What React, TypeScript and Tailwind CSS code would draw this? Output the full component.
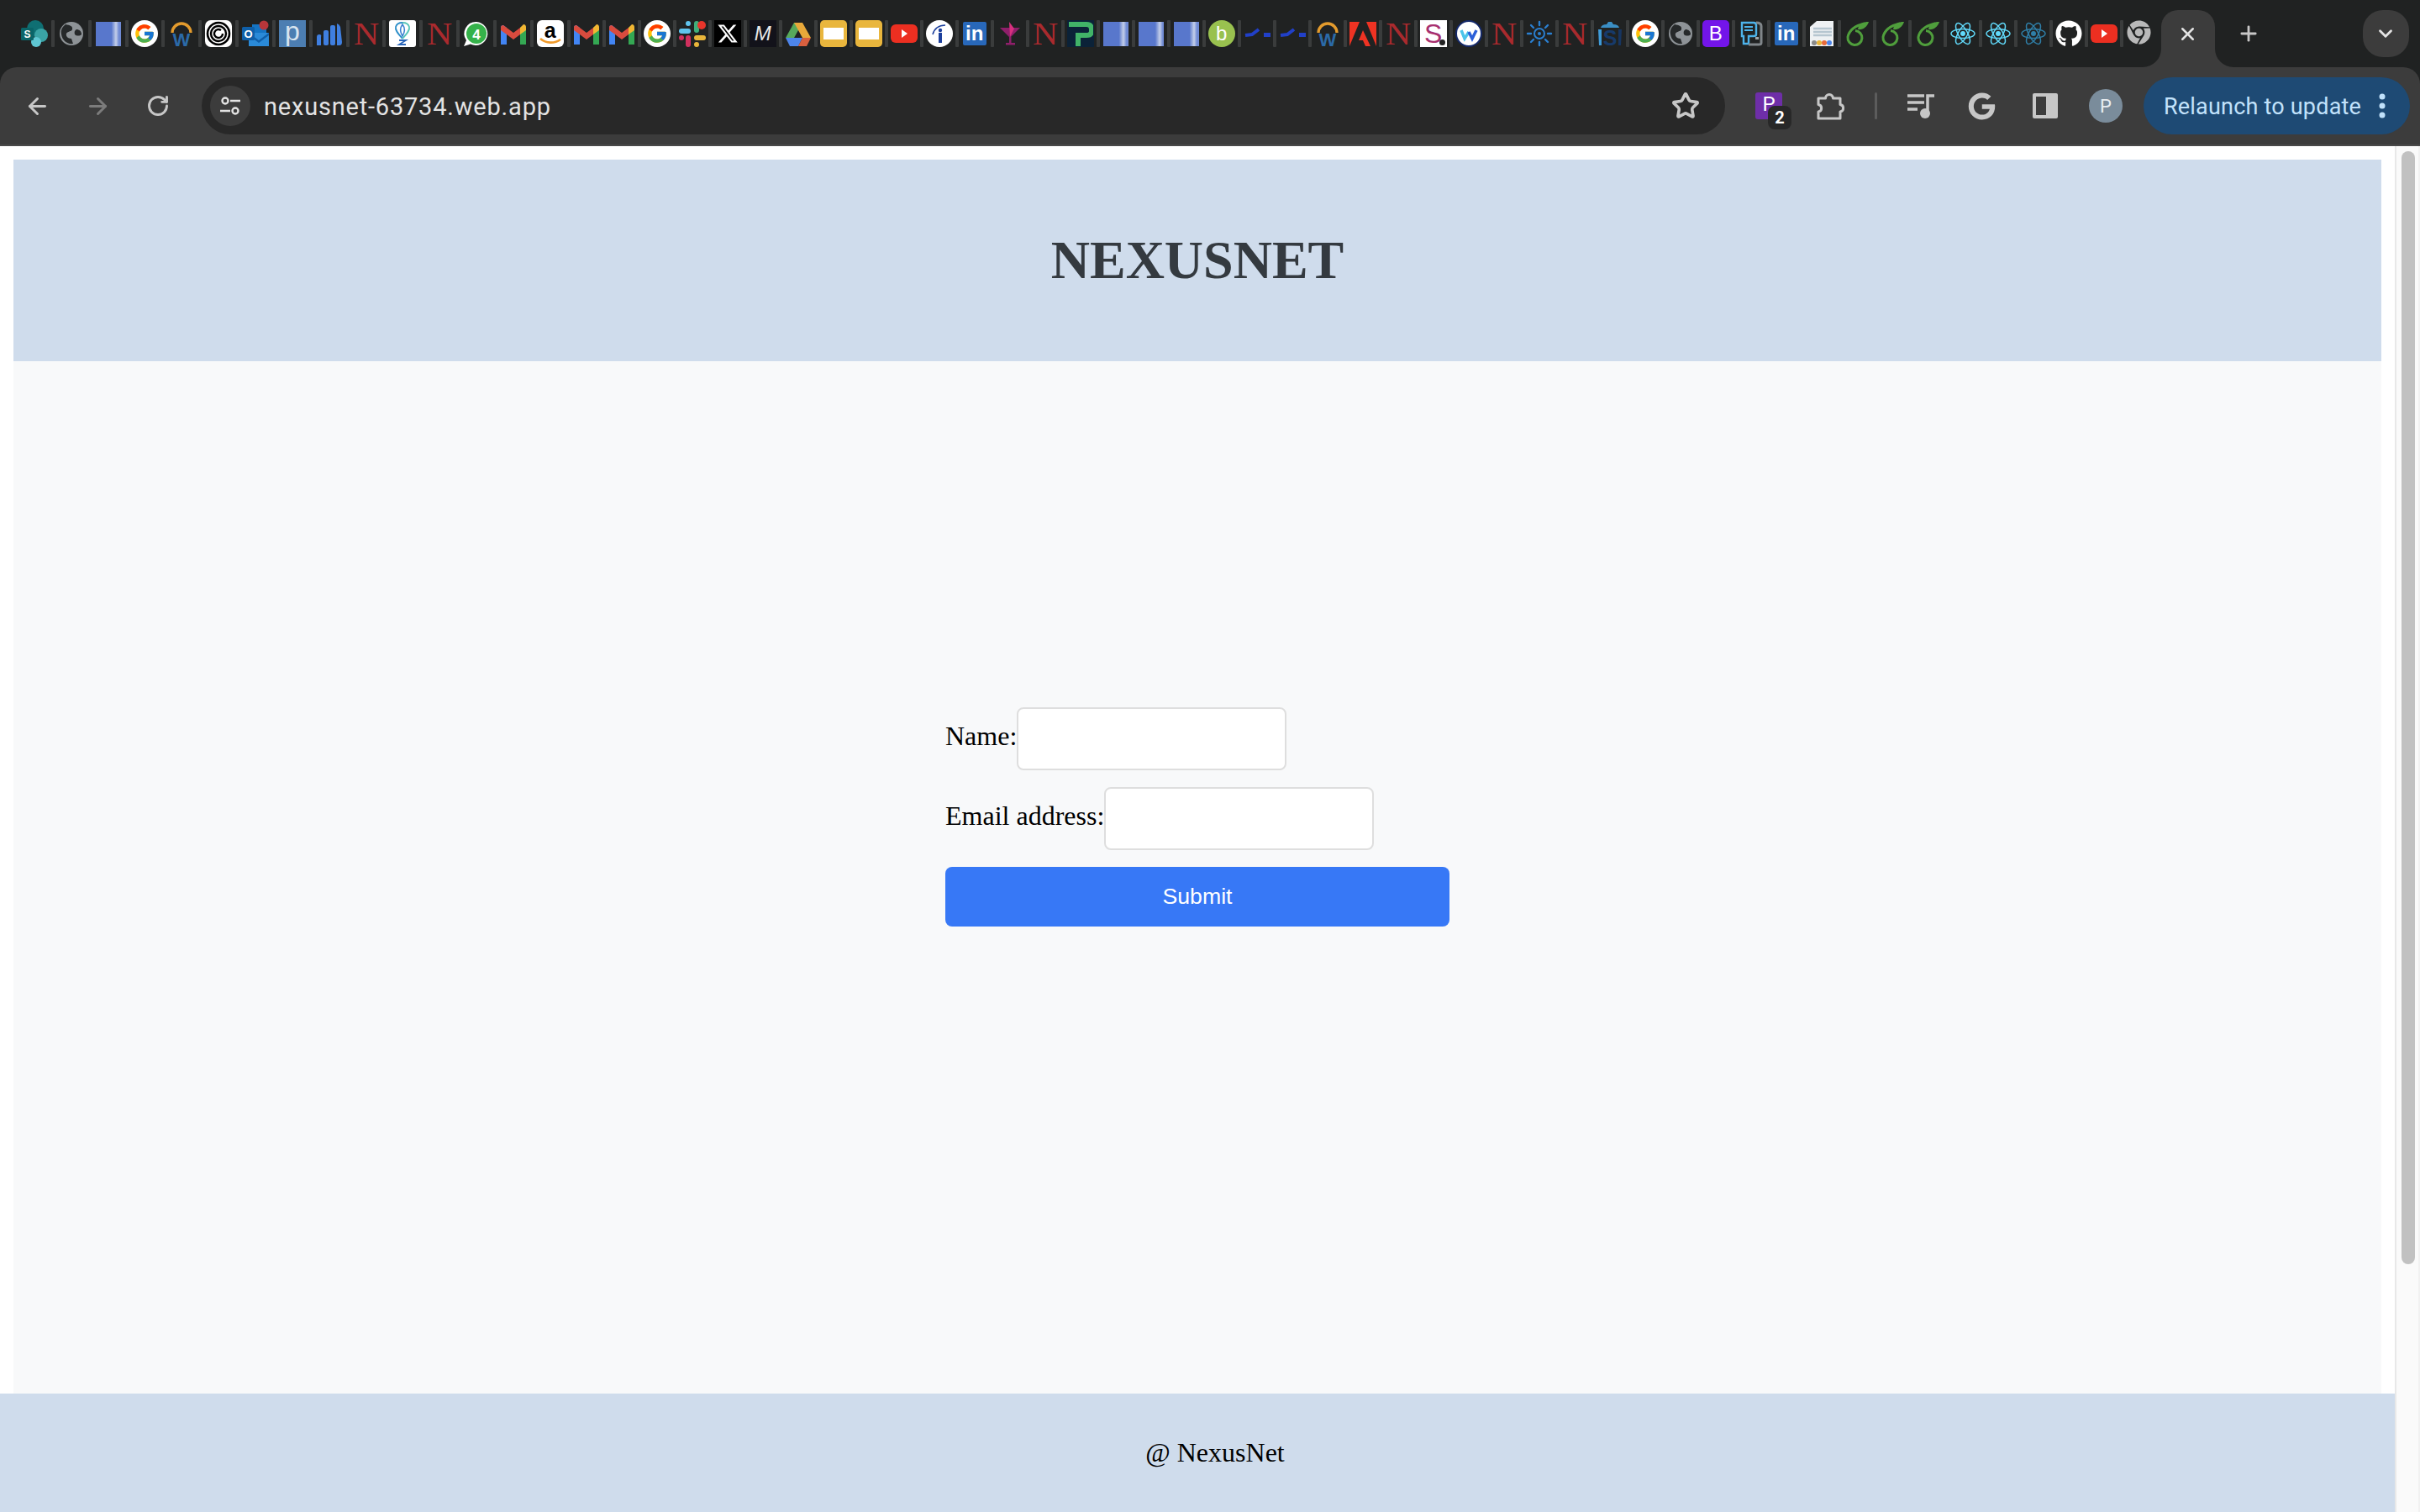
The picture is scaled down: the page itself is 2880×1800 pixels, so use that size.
import React from "react";
import { ArrowLeft, ArrowRight, RotateCw, Star, X, Plus, ChevronDown } from "lucide-react";
import { FcGoogle } from "react-icons/fc";
import { FaGithub, FaChrome, FaGoogle } from "react-icons/fa";
import { FaXTwitter } from "react-icons/fa6";

const S = ({ children }: { children: React.ReactNode }) => (
  <svg width="32" height="32" viewBox="0 0 32 32" className="overflow-visible">{children}</svg>
);
const Sans = '"Liberation Sans", Arial, sans-serif';
const Serif = '"Liberation Serif", serif';

const SharePoint = () => (
  <S>
    <circle cx="17" cy="10" r="10" fill="#0f6f73" />
    <circle cx="24" cy="18" r="8" fill="#3aa3a5" />
    <circle cx="18" cy="26" r="6" fill="#5fc6d2" />
    <rect x="0" y="9" width="15" height="15" rx="1.5" fill="#0a6468" />
    <text x="7.5" y="21" fontSize="12" fontWeight="700" fill="#fff" textAnchor="middle" fontFamily={Sans}>S</text>
  </S>
);
const Globe = () => (
  <S>
    <circle cx="16" cy="16" r="14" fill="#8e9397" />
    <path d="M9 5c5 1 9 2 8 6-1 3-6 2-7 5-1 3 2 6 6 6l2 6c-7 1-13-4-14-11C3 12 5 8 9 5z" fill="#26292a" />
    <path d="M22 11c3 0 6 2 6 6-2 2-6 2-8 0-1-3 0-5 2-6z" fill="#26292a" />
  </S>
);
const BlueDoc = ({ id, o = 0 }: { id: string; o?: number }) => (
  <S>
    <defs>
      <linearGradient id={id} x1="0" x2="1" y1="0" y2="0">
        <stop offset={`${62 + o}%`} stopColor="#5877cc" />
        <stop offset={`${80 + o}%`} stopColor="#c4cfe9" />
        <stop offset={`${92 + o}%`} stopColor="#6f8ad4" />
      </linearGradient>
    </defs>
    <rect x="1" y="2" width="30" height="29" fill={`url(#${id})`} />
  </S>
);
const GoogleIcon = () => (
  <div className="w-8 h-8 rounded-full bg-white flex items-center justify-center">
    <FcGoogle size={26} />
  </div>
);
const Workday = () => (
  <S>
    <path d="M5 15a11 11 0 0 1 22 0" fill="none" stroke="#e39b2d" strokeWidth="3.4" />
    <text x="16" y="31" fontSize="22" fontWeight="700" fill="#2b6aa8" textAnchor="middle" fontFamily={Sans}>W</text>
  </S>
);
const Rings = () => (
  <div className="w-8 h-8 rounded-[7px] bg-white flex items-center justify-center">
    <svg width="30" height="30" viewBox="0 0 30 30" fill="none" stroke="#000">
      <circle cx="15" cy="15" r="13" strokeWidth="2.6" />
      <circle cx="15" cy="15" r="9" strokeWidth="2.4" />
      <path d="M20 15a5 5 0 1 1-2-4" strokeWidth="2.4" />
    </svg>
  </div>
);
const Outlook = () => (
  <S>
    <rect x="12" y="5" width="17" height="14" fill="#1474c4" />
    <path d="M8 15h24v16H8z" fill="#2a8ad8" />
    <path d="M8 15l12 9 12-9v3L20 27 8 18z" fill="#0f5ea8" />
    <rect x="0" y="8" width="15" height="16" rx="1.5" fill="#0f5fa8" />
    <text x="7.5" y="21" fontSize="13" fontWeight="700" fill="#fff" textAnchor="middle" fontFamily={Sans}>O</text>
    <circle cx="26" cy="6" r="5.5" fill="#b8363a" />
  </S>
);
const PBlue = () => (
  <div className="w-8 h-8 bg-[#4c7eb2] flex justify-center">
    <span className="text-[#d9e4ef] text-[32px] leading-[26px] font-normal" style={{ fontFamily: Sans }}>p</span>
  </div>
);
const Bars = () => (
  <S>
    <g fill="#3f7fe0">
      <path d="M1 30V20q0-3 3-3t2 3v10z" />
      <rect x="9" y="12" width="6" height="18" rx="2" />
      <rect x="17" y="6" width="6" height="24" rx="2" />
      <path d="M25 30V4q3 1 4 4l2 18q0 4-3 4z" />
    </g>
  </S>
);
const NIcon = () => (
  <span className="w-8 h-8 flex items-center justify-center text-[#a92a2e] text-[38px] leading-none scale-x-110" style={{ fontFamily: Serif }}>N</span>
);
const Pin = () => (
  <div className="w-8 h-8 rounded-[3px] bg-white flex items-center justify-center">
    <svg width="28" height="30" viewBox="0 0 28 30" fill="none">
      <path d="M14 21C9 15 5 11 6 7c1-4 5-5 8-5" stroke="#2e8fc9" strokeWidth="1.8" />
      <path d="M14 21c5-6 9-10 8-14-1-4-5-5-8-5" stroke="#58c5b8" strokeWidth="1.8" />
      <path d="M14 4c3 4 3 9 0 14-3-5-3-10 0-14z" stroke="#3a7fd0" strokeWidth="1.5" />
      <path d="M10 23h8l-8 5h8" stroke="#2764b8" strokeWidth="1.8" />
    </svg>
  </div>
);
const WhatsApp = () => (
  <S>
    <path d="M16 2a14 14 0 0 0-12 22L1 31l8-2.500A14 14 0 1 0 16 2z" fill="#fff" />
    <circle cx="16" cy="16" r="12" fill="#35b24a" />
    <text x="16" y="22.500" fontSize="17" fontWeight="700" fill="#fff" textAnchor="middle" fontFamily={Sans}>4</text>
  </S>
);
const Gmail = () => (
  <S>
    <path d="M1 29V9q0-3 3-3l4 3v20z" fill="#4285f4" />
    <path d="M24 29V9l4-3q3 0 3 3v20z" fill="#34a853" />
    <path d="M24 9l4-4q3 0 3 4v3l-7 5z" fill="#f2b632" />
    <path d="M4 6l4 3 8 6 8-6v8l-8 6-8-6-7-5V9q0-3 3-3z" fill="#d94b3e" />
  </S>
);
const Amazon = () => (
  <div className="w-8 h-8 rounded-[6px] bg-white relative flex justify-center">
    <span className="text-black text-[25px] leading-[24px] font-bold" style={{ fontFamily: Sans }}>a</span>
    <svg className="absolute left-0 top-0" width="32" height="32" viewBox="0 0 32 32" fill="none">
      <path d="M4 22c7 6 17 6 24 1" stroke="#f09a2a" strokeWidth="2.6" />
    </svg>
  </div>
);
const Slack = () => (
  <S>
    <rect x="0" y="10" width="14" height="6" rx="3" fill="#60c4ee" />
    <rect x="8" y="1" width="6" height="6" rx="3" fill="#60c4ee" />
    <rect x="18" y="1" width="6" height="14" rx="3" fill="#3fae7a" />
    <circle cx="27" cy="6" r="5" fill="#e8352b" />
    <rect x="18" y="18" width="14" height="6" rx="3" fill="#e8b53a" />
    <rect x="18" y="26" width="6" height="6" rx="3" fill="#e8b53a" />
    <rect x="8" y="18" width="6" height="14" rx="3" fill="#d0305e" />
    <rect x="0" y="18" width="6" height="6" rx="3" fill="#d0305e" />
  </S>
);
const XIcon = () => (
  <div className="w-8 h-8 bg-black flex items-center justify-center text-white">
    <FaXTwitter size={26} />
  </div>
);
const MIcon = () => (
  <div className="w-8 h-8 bg-[#12121a] flex items-center justify-center">
    <span className="text-[#e8e8e8] text-[24px] leading-none italic" style={{ fontFamily: Sans }}>M</span>
  </div>
);
const Drive = () => (
  <S>
    <path d="M11 3h10L11 21H1z" fill="#57a95b" />
    <path d="M11 3h10l10 18H21z" fill="#e8a93a" />
    <path d="M1 21h20l-5 10H6z" fill="#4d85ea" />
    <path d="M21 21h10l-5 10H16z" fill="#d9603f" />
  </S>
);
const Slides = () => (
  <div className="w-8 h-8 rounded-[5px] bg-[#e9b63d] flex items-center justify-center">
    <div className="w-6 h-[14px] bg-white" />
  </div>
);
const YouTube = () => (
  <S>
    <rect x="0" y="5" width="32" height="22" rx="6" fill="#ec2f21" />
    <path d="M13 11l7 5-7 5z" fill="#fff" />
  </S>
);
const Info = () => (
  <S>
    <circle cx="16" cy="16" r="16" fill="#fff" />
    <circle cx="17" cy="12" r="2.200" fill="#1c3f9c" />
    <rect x="15" y="15" width="4" height="12" fill="#1c3f9c" />
    <path d="M8 17C10 10 14 6 23 6" stroke="#1c3f9c" strokeWidth="1.6" fill="none" />
  </S>
);
const LinkedIn = () => (
  <div className="w-[28px] h-[28px] rounded-[2px] bg-[#2868ba] flex items-center justify-center mt-[2px]">
    <span className="text-white text-[24px] font-bold leading-none" style={{ fontFamily: Sans }}>in</span>
  </div>
);
const Cocktail = () => (
  <S>
    <path d="M4 9h24L16 21z" fill="#8f1f6b" />
    <path d="M15 2l6 8-5 10z" fill="#d8307f" />
    <rect x="15" y="20" width="2.500" height="8" fill="#8f1f6b" />
    <rect x="11" y="27" width="11" height="2.500" fill="#8f1f6b" />
  </S>
);
const PGreen = () => (
  <div className="w-8 h-8 bg-[#0b2238] flex items-center justify-center">
    <svg width="30" height="32" viewBox="0 0 30 32" fill="none">
      <path d="M1 5h21q6 0 6 6v2q0 5-6 5H12v13" stroke="#41b368" strokeWidth="6" />
    </svg>
  </div>
);
const GreenB = () => (
  <div className="w-8 h-8 rounded-full bg-[#99c14f] flex items-center justify-center">
    <span className="text-white text-[24px] leading-none" style={{ fontFamily: Sans }}>b</span>
  </div>
);
const Dash = () => (
  <S>
    <path d="M2 18l8-1 8-6" stroke="#2140c8" strokeWidth="4" fill="none" />
    <rect x="24" y="15" width="8" height="5" fill="#2140c8" />
  </S>
);
const Adobe = () => (
  <S>
    <path d="M0 2h12L0 31z" fill="#ee3323" />
    <path d="M20 2h12v29z" fill="#ee3323" />
    <path d="M16 12l9 19h-6l-3-7h-5z" fill="#ee3323" />
  </S>
);
const SDot = () => (
  <div className="w-8 h-8 bg-white relative flex justify-center items-center">
    <span className="text-[#a8306f] text-[32px] leading-none" style={{ fontFamily: Sans }}>S</span>
    <div className="absolute right-[2px] bottom-[2px] w-[7px] h-[7px] rounded-full bg-[#222]" />
  </div>
);
const WCircle = () => (
  <S>
    <circle cx="16" cy="16" r="15" fill="#fff" stroke="#14296a" strokeWidth="2" />
    <path d="M7 12l4 10 5-8" stroke="#4cc4ea" strokeWidth="3.500" fill="none" />
    <path d="M16 14l4 8 5-10" stroke="#2b5fd8" strokeWidth="3.500" fill="none" />
  </S>
);
const Sun = () => (
  <S>
    <circle cx="16" cy="16" r="6" fill="none" stroke="#2a7fd0" strokeWidth="2" />
    <circle cx="16" cy="16" r="2" fill="#2a7fd0" />
    <g stroke="#2a7fd0" strokeWidth="2.400" strokeLinecap="round">
      <path d="M16 2v4M16 26v4M2 16h4M26 16h4M6 6l3 3M23 23l3 3M26 6l-3 3M9 23l-3 3" />
    </g>
  </S>
);
const SDark = () => (
  <S>
    <path d="M5 9q1-4 7-4l2-3h4l2 3q6 0 7 4z" fill="#3a8ec4" />
    <path d="M2 11h4v19H3z" fill="#3f9bd8" />
    <path d="M26 11h4l-1 19h-3z" fill="#173560" />
    <text x="16" y="30" fontSize="25" fontWeight="700" fill="#173a6a" textAnchor="middle" fontFamily={Sans}>S</text>
  </S>
);
const BIcon = () => (
  <div className="w-8 h-8 rounded-[5px] bg-[#7315ea] flex items-center justify-center">
    <span className="text-white text-[24px] leading-none" style={{ fontFamily: Sans }}>B</span>
  </div>
);
const Tablet = () => (
  <S>
    <path d="M5 3h14q3 0 3 3v11q0 2-3 2h-6v9H7v-9H5z" fill="none" stroke="#4db3ea" strokeWidth="2.400" />
    <path d="M8 8h10M8 12h10" stroke="#4db3ea" strokeWidth="2" />
    <path d="M22 3q6 0 6 4v20q0 2-3 2H13" fill="none" stroke="#80868a" strokeWidth="3" />
    <rect x="21" y="20" width="4" height="3" fill="#a0a6aa" />
  </S>
);
const DocShot = () => (
  <S>
    <path d="M10 1h20v30H2V8z" fill="#eef1f3" />
    <path d="M6 10h22M6 14h22M6 18h22" stroke="#b6c6d0" strokeWidth="2.500" />
    <circle cx="7" cy="27" r="3" fill="#8a8a8a" />
    <circle cx="13" cy="27" r="3" fill="#e8b53a" />
    <circle cx="19" cy="27" r="3" fill="#e86a3a" />
    <circle cx="25" cy="27" r="3" fill="#4d85ea" />
  </S>
);
const Overleaf = () => (
  <S>
    <path d="M25 4C16 6 7 11 5 20a8.500 8.500 0 1 0 9-7.500" fill="none" stroke="#4f9e3c" strokeWidth="3" />
    <path d="M30 2c-7 0-12 2-13 9 6 1 11-3 13-9z" fill="#4f9e3c" />
  </S>
);
const ReactIcon = ({ c = "#61dafb" }: { c?: string }) => (
  <S>
    <g fill="none" stroke={c} strokeWidth="1.500">
      <ellipse cx="16" cy="16" rx="14" ry="5.500" />
      <ellipse cx="16" cy="16" rx="14" ry="5.500" transform="rotate(60 16 16)" />
      <ellipse cx="16" cy="16" rx="14" ry="5.500" transform="rotate(120 16 16)" />
    </g>
    <circle cx="16" cy="16" r="3" fill={c} />
  </S>
);
const GitHub = () => <FaGithub size={32} color="#fff" />;
const ChromeIcon = () => <FaChrome size={29} color="#b9b9b9" />;

const favs: React.ReactNode[] = [
  <SharePoint />, <Globe />, <BlueDoc id="d1" />, <GoogleIcon />, <Workday />, <Rings />, <Outlook />, <PBlue />,
  <Bars />, <NIcon />, <Pin />, <NIcon />, <WhatsApp />, <Gmail />, <Amazon />, <Gmail />, <Gmail />, <GoogleIcon />,
  <Slack />, <XIcon />, <MIcon />, <Drive />, <Slides />, <Slides />, <YouTube />, <Info />, <LinkedIn />, <Cocktail />,
  <NIcon />, <PGreen />, <BlueDoc id="d2" />, <BlueDoc id="d3" o={4} />, <BlueDoc id="d4" />, <GreenB />, <Dash />, <Dash />,
  <Workday />, <Adobe />, <NIcon />, <SDot />, <WCircle />, <NIcon />, <Sun />, <NIcon />, <SDark />, <GoogleIcon />,
  <Globe />, <BIcon />, <Tablet />, <LinkedIn />, <DocShot />, <Overleaf />, <Overleaf />, <Overleaf />, <ReactIcon />,
  <ReactIcon />, <ReactIcon c="#2f7fa8" />, <GitHub />, <YouTube />, <ChromeIcon />,
];

function TabStrip() {
  return (
    <div className="h-[80px] flex pl-[21px] pt-[24px]">
      {favs.map((f, i) => (
        <React.Fragment key={i}>
          <div className={i < 15 ? "w-[39.85px] h-8 flex justify-center items-start shrink-0" : "w-[38px] h-8 flex justify-center items-start shrink-0"}>
            {f}
          </div>
          {i < favs.length - 1 && <div className="w-[4px] h-8 bg-[#3a3c3c] rounded-[1px] shrink-0" />}
        </React.Fragment>
      ))}
      <div className="relative -mt-3 ml-[7px] w-[64px] h-[68px] bg-[#3c3c3c] rounded-t-[20px] flex justify-center pt-4 text-[#e3e3e3] shrink-0">
        <X size={25} strokeWidth={2.4} />
        <svg className="absolute -left-[22px] bottom-0" width="22" height="22" viewBox="0 0 22 22"><path d="M22 0v22H0a22 22 0 0 0 22-22z" fill="#3c3c3c" /></svg>
        <svg className="absolute -right-[22px] bottom-0" width="22" height="22" viewBox="0 0 22 22"><path d="M0 0v22h22A22 22 0 0 1 0 0z" fill="#3c3c3c" /></svg>
      </div>
      <div className="ml-[20px] w-[40px] h-8 flex items-center justify-center text-[#c7c7c7] shrink-0">
        <Plus size={28} strokeWidth={2.4} />
      </div>
      <div className="-mt-3 ml-[116px] w-[55px] h-[56px] rounded-[24px] bg-[#3c3c3c] flex items-center justify-center text-[#e3e3e3] shrink-0">
        <ChevronDown size={26} strokeWidth={2.6} />
      </div>
    </div>
  );
}

const Slot = ({ children, className = "" }: { children: React.ReactNode; className?: string }) => (
  <div className={"w-[72px] h-[68px] flex items-center justify-center shrink-0 " + className}>{children}</div>
);

function Toolbar() {
  return (
    <div className="h-[94px] bg-[#3c3c3c] border-b-2 border-[#494949] rounded-t-[20px] flex items-center pl-2 pr-[13px]" style={{ fontFamily: "Roboto, sans-serif" }}>
      <Slot><ArrowLeft size={31} strokeWidth={2.3} className="text-[#c7c7c7]" /></Slot>
      <Slot><ArrowRight size={31} strokeWidth={2.3} className="text-[#7c7c7c]" /></Slot>
      <Slot><RotateCw size={28} strokeWidth={2.5} className="text-[#c7c7c7]" /></Slot>
      <div className="ml-4 w-[1813px] h-[68px] rounded-[34px] bg-[#282828] flex items-center pl-[10px] pr-[30px] shrink-0">
        <div className="w-12 h-12 rounded-full bg-[#3c3c3c] flex items-center justify-center">
          <svg width="26" height="26" viewBox="0 0 26 26" fill="none" stroke="#e3e3e3" strokeWidth="2.400">
            <circle cx="7" cy="7" r="3.500" />
            <path d="M13 7h12M1 19h12" />
            <circle cx="19" cy="19" r="3.500" />
          </svg>
        </div>
        <span className="ml-4 mt-[2px] text-[29px] leading-none text-[#e3e3e3] tracking-[0.8px]">nexusnet-63734.web.app</span>
        <Star size={34} strokeWidth={2.6} className="ml-auto text-[#c7c7c7]" />
      </div>
      <Slot className="ml-4">
        <div className="relative w-[32px] h-[32px] rounded-[3px] bg-[#6e2ea8] flex justify-center">
          <span className="text-white text-[24px] leading-[28px]">P</span>
          <div className="absolute left-[15px] top-[16px] w-[28px] h-[28px] rounded-[8px] bg-[#282828] flex items-center justify-center text-white text-[20px] font-bold">2</div>
        </div>
      </Slot>
      <Slot className="ml-px">
        <svg width="34" height="34" viewBox="0 0 34 34" fill="none" stroke="#c7c7c7" strokeWidth="3" strokeLinejoin="round">
          <path d="M3 8h8.500a4.500 4.500 0 0 1 9 0H29v7.500a4.300 4.300 0 0 1 0 8.500v8H3v-8a4.300 4.300 0 0 0 0-8.500z" />
        </svg>
      </Slot>
      <div className="w-9 flex justify-center shrink-0"><div className="w-[3px] h-8 rounded-full bg-[#5c5c5c]" /></div>
      <Slot>
        <svg width="34" height="32" viewBox="0 0 34 32" fill="none">
          <path d="M1 4h20M1 12h20M1 20h12" stroke="#c7c7c7" strokeWidth="3.500" />
          <path d="M25 24V4h8" stroke="#c7c7c7" strokeWidth="3.500" />
          <circle cx="22" cy="25" r="6" fill="#c7c7c7" />
        </svg>
      </Slot>
      <Slot><FaGoogle size={33} color="#c7c7c7" /></Slot>
      <Slot className="ml-1">
        <svg width="30" height="30" viewBox="0 0 30 30">
          <rect x="0" y="0" width="30" height="30" rx="2" fill="#c7c7c7" />
          <rect x="4" y="4" width="12" height="22" fill="#3c3c3c" />
        </svg>
      </Slot>
      <Slot>
        <div className="w-10 h-10 rounded-full bg-[#7a8c9b] flex items-center justify-center text-[#e8edf1] text-[22px]">P</div>
      </Slot>
      <div className="ml-[9px] w-[317px] h-[68px] rounded-[34px] bg-[#1e4a74] flex items-center pl-6 text-[#c2e2fb] shrink-0">
        <span className="mt-[2px] text-[27px] leading-none whitespace-nowrap tracking-[0.2px]">Relaunch to update</span>
        <svg className="ml-[21px]" width="8" height="30" viewBox="0 0 8 30" fill="#c2e2fb">
          <circle cx="4" cy="4" r="3.500" />
          <circle cx="4" cy="15" r="3.500" />
          <circle cx="4" cy="26" r="3.500" />
        </svg>
      </div>
    </div>
  );
}

function Page() {
  return (
    <div className="flex-1 flex flex-col min-w-0 bg-white" style={{ fontFamily: Serif }}>
      <header className="mt-4 mx-4 h-[240px] bg-[#cfdcec] flex items-center justify-center shrink-0">
        <h1 className="text-[64px] leading-none font-bold text-[#343a40]">NEXUSNET</h1>
      </header>
      <main className="flex-1 mx-4 bg-[#f8f9fa] pt-[412px]">
        <form className="w-[600px] mx-auto flex flex-col gap-5 text-[32px] text-black">
          <label className="flex items-center h-[75px]">
            <span className="pb-[7px]">Name:</span>
            <input type="text" className="w-[321px] h-[75px] rounded-[8px] border-2 border-[#dedede] bg-white" />
          </label>
          <label className="flex items-center h-[75px]">
            <span className="pb-[7px]">Email address:</span>
            <input type="email" className="w-[321px] h-[75px] rounded-[8px] border-2 border-[#dedede] bg-white" />
          </label>
          <button type="button" className="h-[71px] pb-[2px] rounded-[8px] bg-[#3778f6] text-white text-[26.67px]" style={{ fontFamily: Sans }}>Submit</button>
        </form>
      </main>
      <footer className="h-[141px] bg-[#cfdcec] pt-[46px] pl-[42px] text-center text-[32px] text-black shrink-0">@ NexusNet</footer>
    </div>
  );
}

export default function App() {
  return (
    <div className="w-[2880px] h-[1800px] overflow-hidden flex flex-col bg-white">
      <div className="bg-[#202222]">
        <TabStrip />
        <Toolbar />
      </div>
      <div className="flex-1 flex min-h-0">
        <Page />
        <div className="w-[30px] bg-[#fafafa] border-l-2 border-[#e8e8e8] border-r-2 border-r-[#f1f1f1] pt-[6px] pl-[6px] shrink-0">
          <div className="w-[16px] h-[1325px] rounded-full bg-[#c1c1c1]" />
        </div>
      </div>
    </div>
  );
}
